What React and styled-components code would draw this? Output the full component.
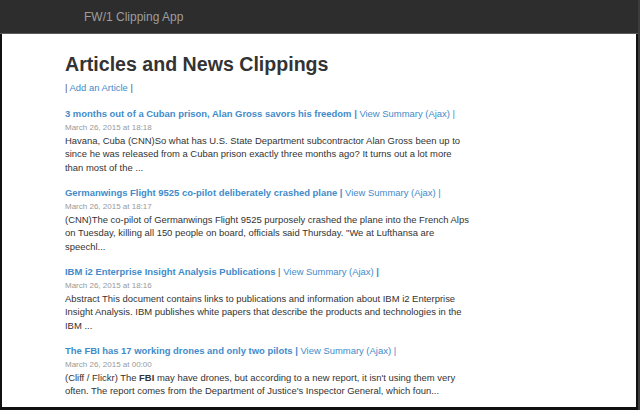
import React from "react";
import styled, { createGlobalStyle } from "styled-components";

const GlobalStyle = createGlobalStyle`
  html, body {
    margin: 0;
    padding: 0;
    background: #ffffff;
  }
  body {
    font-family: "Liberation Sans", Arial, sans-serif;
    color: #333333;
  }
`;

const Frame = styled.div`
  width: 640px;
  height: 410px;
  display: flex;
  flex-direction: column;
  box-sizing: border-box;
  border-right: 2px solid #3c3c3c;
  overflow: hidden;
`;

const Navbar = styled.div`
  height: 33px;
  flex-shrink: 0;
  background: #2d2d2d;
  border-bottom: 1px solid #5c5c5c;
  display: flex;
  align-items: center;
  padding-left: 84px;
`;

const Brand = styled.span`
  color: #9d9d9d;
  font-size: 12px;
`;

const Main = styled.div`
  flex: 1;
  min-height: 0;
  background: #ffffff;
  border-left: 2px solid #111111;
  border-right: 2px solid #111111;
  border-bottom: 3px solid #111111;
  padding-left: 63px;
  overflow: hidden;
`;

const Title = styled.h2`
  margin: 19px 0 6px;
  font-size: 19.6px;
  line-height: 22px;
  font-weight: bold;
  color: #333333;
`;

const Actions = styled.p`
  margin: 0 0 13px;
  font-size: 9.45px;
  line-height: 13.33px;
  color: #555555;
`;

const Link = styled.a`
  color: #428bca;
  text-decoration: none;
  font-weight: ${(p) => (p.$bold ? "bold" : "normal")};
`;

const Bar = styled.span`
  color: ${(p) => (p.$blue ? "#428bca" : "#555555")};
  font-weight: ${(p) => (p.$bold ? "bold" : "normal")};
`;

const Item = styled.div`
  margin-bottom: 12.33px;
`;

const Headline = styled.div`
  font-size: 9.45px;
  line-height: 13.33px;
  white-space: nowrap;
`;

const Date = styled.div`
  font-size: 8px;
  line-height: 13.33px;
  color: #999999;
`;

const Body = styled.div`
  font-size: 9.45px;
  line-height: 13.33px;
  color: #333333;
`;

const Line = styled.div`
  white-space: nowrap;
`;

const articles = [
  {
    title: "3 months out of a Cuban prison, Alan Gross savors his freedom",
    date: "March 26, 2015 at 18:18",
    lines: [
      "Havana, Cuba (CNN)So what has U.S. State Department subcontractor Alan Gross been up to",
      "since he was released from a Cuban prison exactly three months ago? It turns out a lot more",
      "than most of the ...",
    ],
    boldBar: true,
  },
  {
    title: "Germanwings Flight 9525 co-pilot deliberately crashed plane",
    date: "March 26, 2015 at 18:17",
    lines: [
      "(CNN)The co-pilot of Germanwings Flight 9525 purposely crashed the plane into the French Alps",
      "on Tuesday, killing all 150 people on board, officials said Thursday. \"We at Lufthansa are",
      "speechl...",
    ],
    boldBar: true,
  },
  {
    title: "IBM i2 Enterprise Insight Analysis Publications",
    date: "March 26, 2015 at 18:16",
    lines: [
      "Abstract This document contains links to publications and information about IBM i2 Enterprise",
      "Insight Analysis. IBM publishes white papers that describe the products and technologies in the",
      "IBM ...",
    ],
    boldBar: false,
  },
  {
    title: "The FBI has 17 working drones and only two pilots",
    date: "March 26, 2015 at 00:00",
    lines: [
      <>
        (Cliff / Flickr) The <b>FBI</b> may have drones, but according to a new
        report, it isn't using them very
      </>,
      "often. The report comes from the Department of Justice's Inspector General, which foun...",
    ],
    boldBar: true,
  },
];

const App = () => {
  return (
    <>
      <GlobalStyle />
      <Frame>
        <Navbar>
          <Brand>FW/1 Clipping App</Brand>
        </Navbar>
        <Main>
          <Title>Articles and News Clippings</Title>
          <Actions>
            | <Link href="#">Add an Article</Link> |
          </Actions>
          {articles.map((article) => (
            <Item key={article.date}>
              <Headline>
                <Link href="#" $bold>
                  {article.title}
                </Link>{" "}
                <Bar $blue={article.boldBar} $bold={article.boldBar}>
                  |
                </Bar>{" "}
                <Link href="#">View Summary (Ajax)</Link>{" "}
                <Bar $blue $bold={!article.boldBar}>
                  |
                </Bar>
              </Headline>
              <Date>{article.date}</Date>
              <Body>
                {article.lines.map((line, i) => (
                  <Line key={i}>{line}</Line>
                ))}
              </Body>
            </Item>
          ))}
        </Main>
      </Frame>
    </>
  );
};

export default App;
